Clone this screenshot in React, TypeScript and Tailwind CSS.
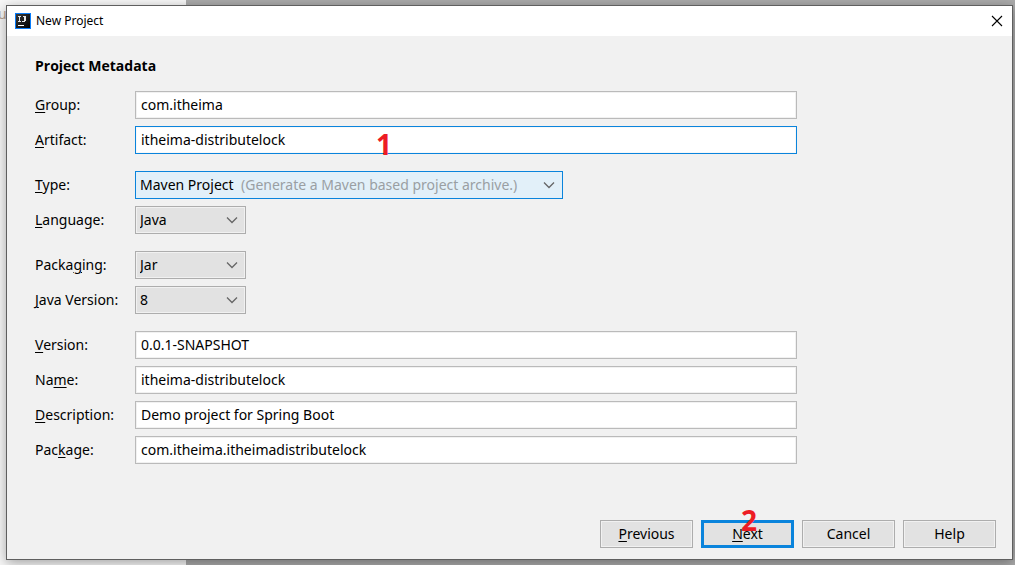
import React from "react";

function Mnemonic({ text, at }: { text: string; at: number }) {
  return (
    <span>
      {text.slice(0, at)}
      <span className="underline decoration-1 underline-offset-2">{text[at]}</span>
      {text.slice(at + 1)}
    </span>
  );
}

type RowProps = { id: string; label: string; at: number; children: React.ReactNode };

function Row({ id, label, at, children }: RowProps) {
  return (
    <div className="flex items-center">
      <label htmlFor={id} className="w-[100px] shrink-0 whitespace-nowrap leading-7">
        <Mnemonic text={label} at={at} />
      </label>
      {children}
    </div>
  );
}

type FieldProps = { id: string; label: string; at: number; value: string; active?: boolean };

function Field({ id, label, at, value, active }: FieldProps) {
  return (
    <Row id={id} label={label} at={at}>
      <input
        id={id}
        type="text"
        defaultValue={value}
        className={
          "h-7 min-w-0 flex-1 border bg-white px-[5px] pb-0.5 outline-none " +
          (active
            ? "border-[#0a84dc] shadow-[inset_0_0_0_1px_#f8f8f8]"
            : "border-[#bababa] shadow-[inset_0_0_0_1px_#f1f1f1]")
        }
      />
    </Row>
  );
}

function Chevron() {
  return (
    <svg
      viewBox="0 0 12 8"
      className="pointer-events-none col-start-1 row-start-1 mr-2 h-2 w-3 justify-self-end"
      fill="none"
      stroke="#666"
      strokeWidth="1.3"
      aria-hidden="true"
    >
      <path d="M1 1.5 6 6.5 11 1.5" />
    </svg>
  );
}

type ChoiceProps = { id: string; label: string; at: number; options: string[] };

function Choice({ id, label, at, options }: ChoiceProps) {
  return (
    <Row id={id} label={label} at={at}>
      <span className="grid w-[111px] items-center">
        <select
          id={id}
          className="col-start-1 row-start-1 h-7 w-full appearance-none border border-[#adadad] bg-[#e2e2e2] pl-1 pr-6 shadow-[inset_0_0_0_1px_#f1f1f1] outline-none"
        >
          {options.map((o) => (
            <option key={o}>{o}</option>
          ))}
        </select>
        <Chevron />
      </span>
    </Row>
  );
}

function TypeChoice() {
  return (
    <Row id="type" label="Type:" at={0}>
      <span className="grid w-[428px] items-center">
        <select
          id="type"
          className="col-start-1 row-start-1 h-7 w-full appearance-none border border-[#0a84dc] bg-[#e2f0f9] pl-1 pr-6 outline-none"
        >
          <option>Maven Project</option>
        </select>
        <span className="pointer-events-none col-start-1 row-start-1 ml-[106px] whitespace-nowrap text-[#9a9fa3]">
          (Generate a Maven based project archive.)
        </span>
        <Chevron />
      </span>
    </Row>
  );
}

const buttonClass =
  "h-7 w-[93px] border border-[#adadad] bg-[#e2e2e2] shadow-[inset_0_0_0_1px_#f1f1f1]";

export default function App() {
  return (
    <div className="relative flex min-h-screen flex-col bg-[#ababab] pt-[5px] pr-[2px] pb-[5px] pl-[6px] font-['Noto_Sans',sans-serif] text-[14px] leading-5 text-black">
      <div className="absolute inset-y-0 left-0 w-[186px] overflow-hidden bg-[#f8f8f8]">
        <span className="absolute top-1 -left-0.5 text-[#b9a596]">u</span>
      </div>

      <section
        aria-labelledby="title"
        className="relative flex flex-1 flex-col border border-[#5f5f5f] bg-[#f1f1f1] shadow-[0_3px_12px_rgba(0,0,0,0.35)]"
      >
        <header className="flex h-[30px] items-center bg-white pr-[9px] pl-2">
          <svg viewBox="0 0 16 16" className="h-4 w-4" shapeRendering="crispEdges" aria-hidden="true">
            <defs>
              <linearGradient id="logo" x1="0" y1="0" x2="1" y2="1">
                <stop offset="0" stopColor="#3a3a3a" />
                <stop offset="1" stopColor="#000" />
              </linearGradient>
            </defs>
            <rect width="16" height="16" fill="#087cfa" />
            <rect x="1" y="1" width="14" height="14" fill="url(#logo)" />
            <path
              d="M3 3h3v1H5v4h1v1H3V8h1V4H3zM8 3h3v5h-1v1H7V8h2V4H8z"
              fill="#e6e6e6"
            />
            <path d="M3 12h6v1H3z" fill="#fff" />
          </svg>
          <h1 id="title" className="ml-[5px] text-[12px]">
            New Project
          </h1>
          <button type="button" aria-label="Close" className="ml-auto">
            <svg viewBox="0 0 12 12" className="h-3 w-3" stroke="#000" strokeWidth="1.1" aria-hidden="true">
              <path d="M1 1 11 11M11 1 1 11" />
            </svg>
          </button>
        </header>

        <form className="flex flex-1 flex-col pt-5 pr-4 pb-[11px] pl-7" onSubmit={(e) => e.preventDefault()}>
          <h2 className="font-['Open_Sans',sans-serif] font-bold">Project Metadata</h2>

          <div className="mt-[15px] flex max-w-[762px] flex-col gap-[17px]">
            <div className="flex flex-col gap-[7px]">
              <Field id="group" label="Group:" at={0} value="com.itheima" />
              <div className="relative">
                <Field id="artifact" label="Artifact:" at={0} value="itheima-distributelock" active />
                <span className="pointer-events-none absolute top-1 left-[341px] text-[28px] leading-7 font-bold text-[#ed1c24]">
                  1
                </span>
              </div>
            </div>
            <div className="flex flex-col gap-[7px]">
              <TypeChoice />
              <Choice id="language" label="Language:" at={0} options={["Java", "Kotlin", "Groovy"]} />
            </div>
            <div className="flex flex-col gap-[7px]">
              <Choice id="packaging" label="Packaging:" at={5} options={["Jar", "War"]} />
              <Choice id="java" label="Java Version:" at={0} options={["8", "11", "17"]} />
            </div>
            <div className="flex flex-col gap-[7px]">
              <Field id="version" label="Version:" at={0} value="0.0.1-SNAPSHOT" />
              <Field id="name" label="Name:" at={2} value="itheima-distributelock" />
              <Field id="description" label="Description:" at={0} value="Demo project for Spring Boot" />
              <Field id="package" label="Package:" at={3} value="com.itheima.itheimadistributelock" />
            </div>
          </div>

          <div className="mt-auto flex justify-end gap-2">
            <button type="button" className={buttonClass}>
              <Mnemonic text="Previous" at={0} />
            </button>
            <div className="relative">
              <button type="submit" className="h-7 w-[93px] border-[3px] border-[#0a84dc] bg-[#e2e2e2]">
                <Mnemonic text="Next" at={0} />
              </button>
              <span className="pointer-events-none absolute -top-3.5 left-10 text-[28px] leading-7 font-bold text-[#ed1c24]">
                2
              </span>
            </div>
            <button type="button" className={buttonClass}>
              Cancel
            </button>
            <button type="button" className={buttonClass}>
              Help
            </button>
          </div>
        </form>
      </section>
    </div>
  );
}
